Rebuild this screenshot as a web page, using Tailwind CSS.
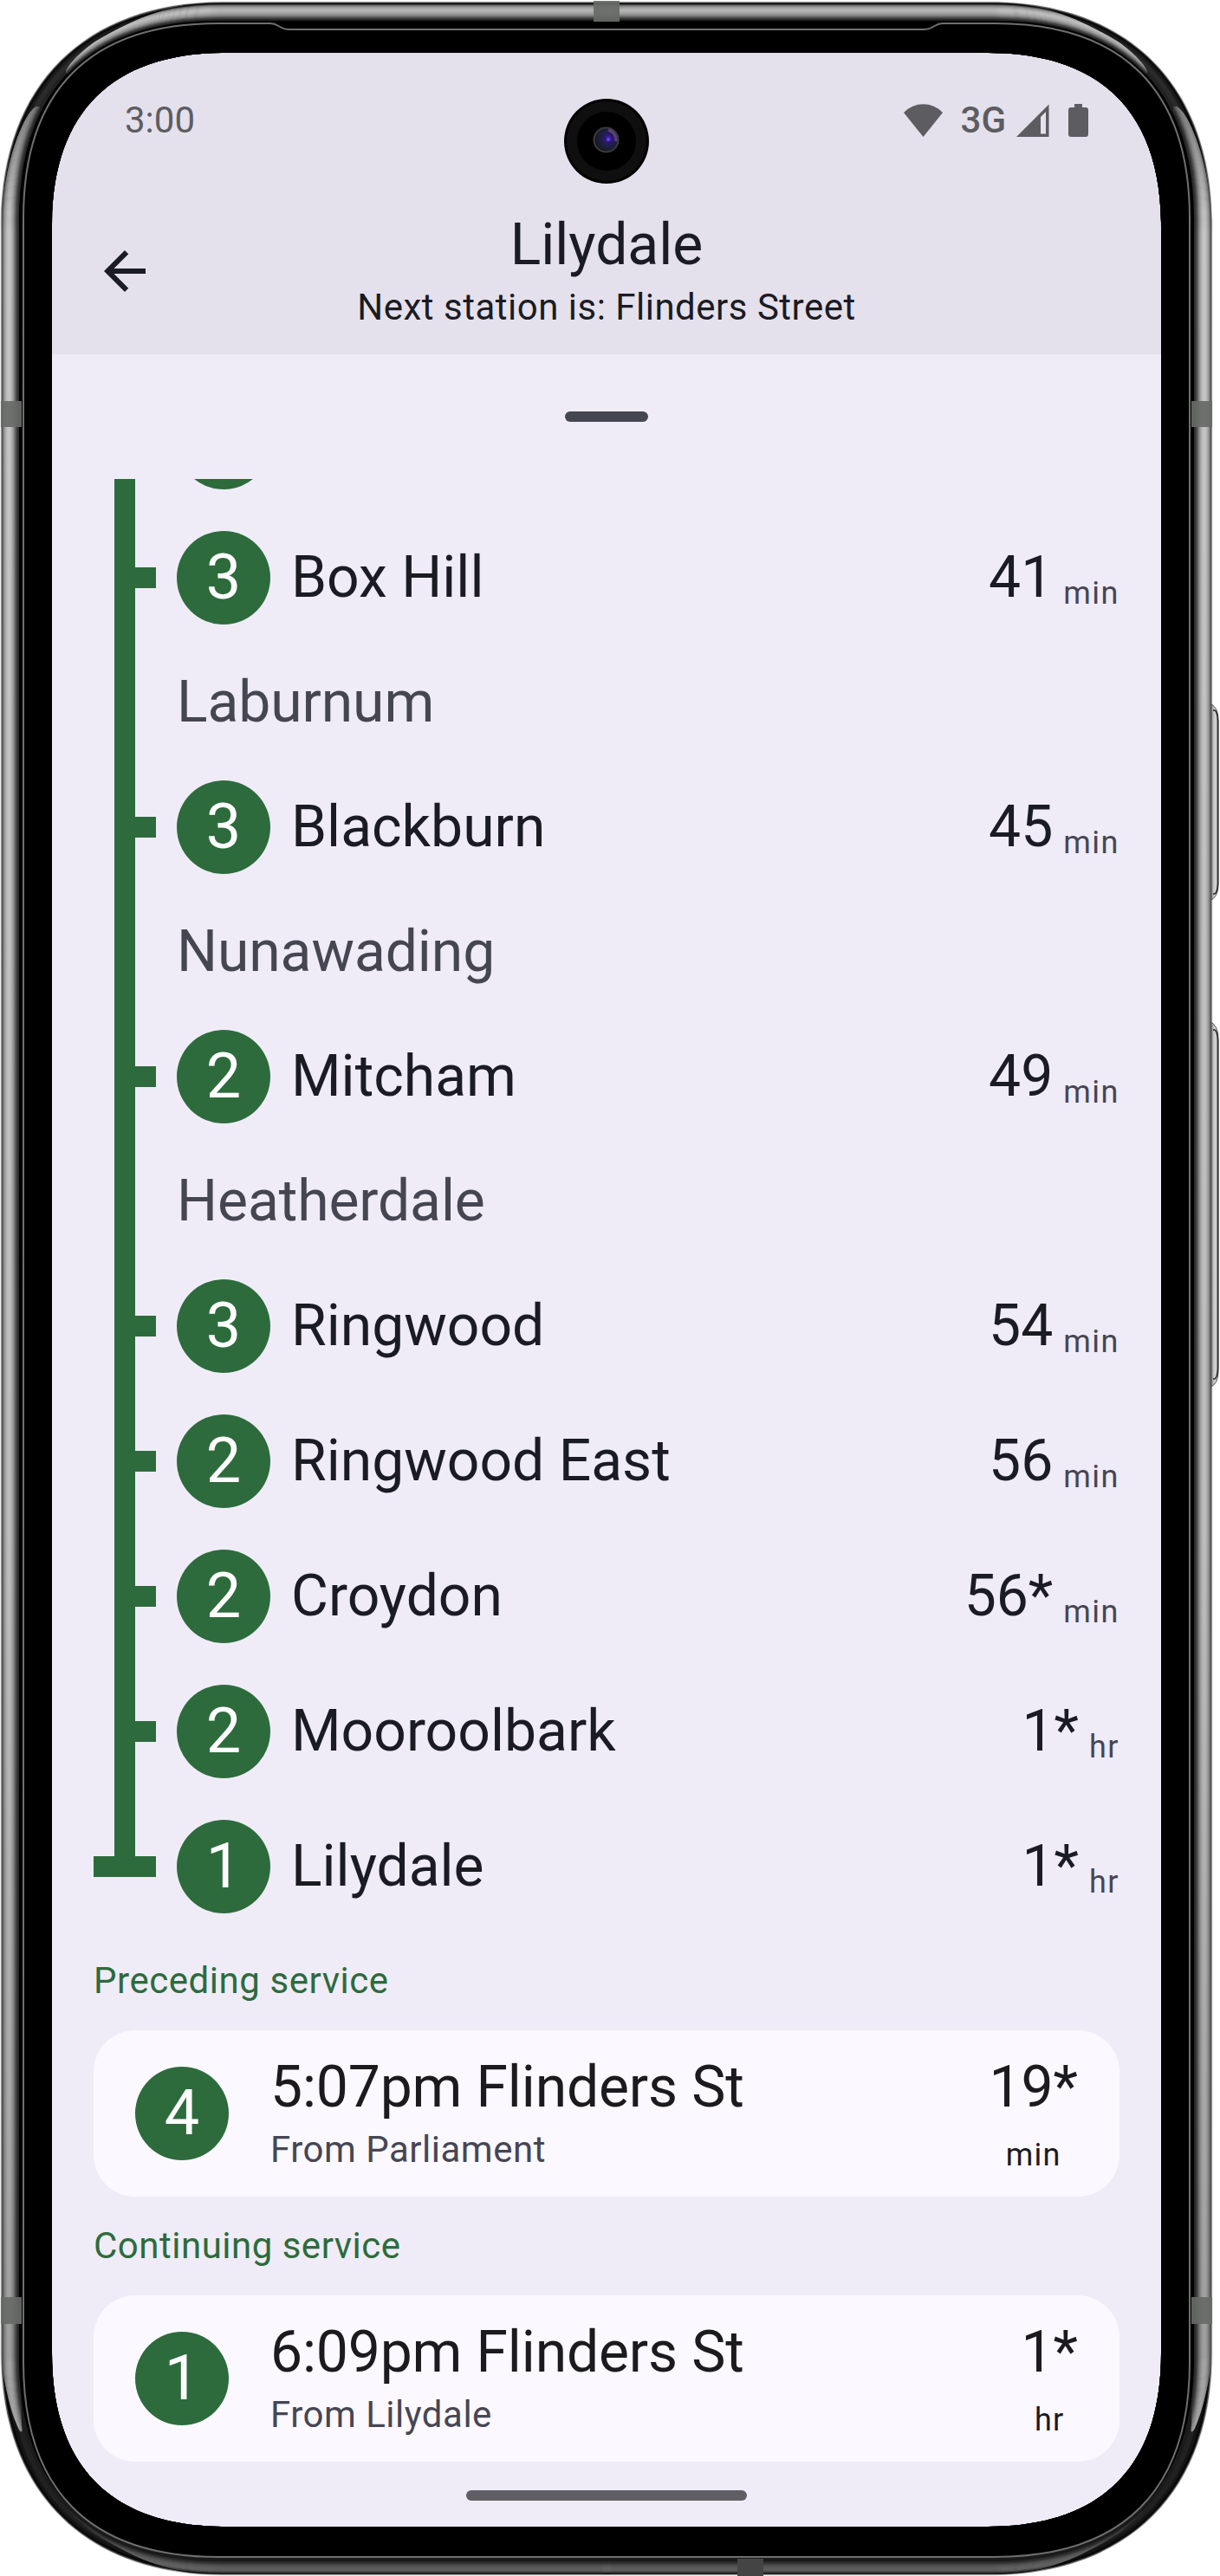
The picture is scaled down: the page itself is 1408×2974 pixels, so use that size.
<!DOCTYPE html>
<html lang="en">
<head>
<meta charset="utf-8">
<title>Lilydale service</title>
<script src="https://cdn.jsdelivr.net/npm/@tailwindcss/browser@4"></script>
</head>
<body class="bg-white">
<div class="relative w-[1408px] h-[2974px] overflow-hidden pl-[60px] pt-[61px] font-[Roboto,sans-serif]">

  <main class="w-[1280px] h-[2856px] bg-[#efecf7] rounded-[130px] overflow-hidden flex flex-col text-[#1b1b23]">
    <header class="h-[348px] shrink-0 bg-[#e4e1ec] flex flex-col">
      <div class="h-[156px] flex items-center justify-between pl-[84px] pr-[84px] text-[42px] leading-[60px] text-[#5d5c61]">
        <span>3:00</span>
        <div class="flex items-center">
          <svg class="w-[45px] h-[38px]" viewBox="0 0 45 38" fill="#5d5c61"><path d="M0 10Q9.500 .3 22.500 .3T45 10L22.500 38Z"/></svg>
          <span class="ml-[21px] font-medium">3G</span>
          <svg class="ml-[12px] w-[38px] h-[38px]" viewBox="0 0 38 38" fill="#5d5c61"><path fill-rule="evenodd" d="M37.500 .500V38H0ZM34 9L28 15V34.500H34Z"/></svg>
          <svg class="ml-[22px] w-[23px] h-[38px]" viewBox="0 0 23 38" fill="#5d5c61"><path d="M7 0H16V4H20Q23 4 23 7V35Q23 38 20 38H3Q0 38 0 35V7Q0 4 3 4H7Z"/></svg>
        </div>
      </div>
      <div class="grid grid-cols-[72px_1fr_72px] items-center px-[48px] pt-[24px]">
        <svg class="w-[72px] h-[72px]" viewBox="0 0 24 24" fill="#1b1b23"><path d="M20 11H7.830l5.590-5.590L12 4l-8 8 8 8 1.410-1.410L7.830 13H20v-2z"/></svg>
        <div class="text-center">
          <h1 class="text-[66px] leading-[84px]">Lilydale</h1>
          <p class="text-[42px] leading-[60px] tracking-[0.5px]">Next station is: Flinders Street</p>
        </div>
      </div>
    </header>

    <div class="h-[144px] shrink-0 flex justify-center pt-[66px]">
      <div class="w-[96px] h-[12px] rounded-full bg-[#464653]"></div>
    </div>

    <section class="h-[1680px] shrink-0 overflow-hidden flex flex-col justify-end px-[48px] text-[66px] leading-[84px]">
      <div id="stops" class="flex flex-col"></div>
    </section>

    <section class="px-[48px] flex flex-col">
      <h2 class="pt-[24px] pb-[27px] text-[42px] leading-[60px] tracking-[0.55px] text-[#2d6b3c]">Preceding service</h2>
      <article class="h-[192px] rounded-[48px] bg-[#fbf8ff] px-[48px] py-[24px] flex items-center text-[#1b1b1f]">
        <div class="size-[108px] rounded-full bg-[#2d6b3c] text-white text-[72px] leading-none flex items-center justify-center">4</div>
        <div class="ml-[48px] flex-1">
          <div class="text-[66px] leading-[84px] tracking-[-0.15px]">5:07pm Flinders St</div>
          <div class="text-[42px] leading-[60px] tracking-[0.5px] text-[#464653]">From Parliament</div>
        </div>
        <div class="h-full flex flex-col items-center justify-between">
          <span class="text-[66px] leading-[84px]">19*</span>
          <span class="text-[36px] leading-[48px] tracking-[1.2px]">min</span>
        </div>
      </article>
      <h2 class="pt-[27px] pb-[27px] text-[42px] leading-[60px] tracking-[0.5px] text-[#2d6b3c]">Continuing service</h2>
      <article class="h-[192px] rounded-[48px] bg-[#fbf8ff] px-[48px] py-[24px] flex items-center text-[#1b1b1f]">
        <div class="size-[108px] rounded-full bg-[#2d6b3c] text-white text-[72px] leading-none flex items-center justify-center">1</div>
        <div class="ml-[48px] flex-1">
          <div class="text-[66px] leading-[84px] tracking-[-0.15px]">6:09pm Flinders St</div>
          <div class="text-[42px] leading-[60px] tracking-[0.5px] text-[#464653]">From Lilydale</div>
        </div>
        <div class="h-full flex flex-col items-center justify-between">
          <span class="text-[66px] leading-[84px]">1*</span>
          <span class="text-[36px] leading-[48px] tracking-[1.2px]">hr</span>
        </div>
      </article>
    </section>

    <div class="flex justify-center pt-[33px]">
      <div class="w-[324px] h-[12px] rounded-full bg-[#5f5e64]"></div>
    </div>
  </main>

  <!-- Device body: laid over the screen, with a cut-out for the display -->
  <svg class="absolute inset-0 pointer-events-none" width="1408" height="2974" viewBox="0 0 1408 2974">
    <defs>
      <linearGradient id="fall" x1="0" y1="0" x2="0" y2="2974" gradientUnits="userSpaceOnUse"><stop offset="0" stop-color="#000" stop-opacity="0"/><stop offset=".6" stop-color="#000" stop-opacity=".05"/><stop offset="1" stop-color="#000" stop-opacity=".24"/></linearGradient>
      <linearGradient id="fade" x1="0" y1="120" x2="0" y2="270" gradientUnits="userSpaceOnUse"><stop offset="0" stop-color="#000" stop-opacity=".4"/><stop offset="1" stop-color="#000" stop-opacity="0"/></linearGradient>
      <radialGradient id="lens" cx=".6" cy=".45" r=".55"><stop offset="0" stop-color="#4a2ad0"/><stop offset=".3" stop-color="#2a1a6a"/><stop offset=".7" stop-color="#1c2038"/><stop offset="1" stop-color="#151a20"/></radialGradient>
      <linearGradient id="key" x1="1396" x2="1407" y1="0" y2="0" gradientUnits="userSpaceOnUse"><stop offset="0" stop-color="#777"/><stop offset=".35" stop-color="#bbb"/><stop offset=".6" stop-color="#d4d4d4"/><stop offset="1" stop-color="#aaa"/></linearGradient>
      <clipPath id="sides"><path d="M0 262C4 205 16 158 34 131C40 123 45 121 46 125C44 140 27 190 24 262V2712C24 2750 24 2770 25 2800C26 2808 25 2809 22 2805C12 2785 3 2745 0 2712Z"/></clipPath>
      <clipPath id="upper"><path d="M705 0H258C200 4 160 18 110 48C90 62 78 76 76 83C77 86 79 85 81 83C125 49 175 27 258 26H705Z"/></clipPath>
      <clipPath id="lower"><path d="M705 2974H258C200 2972 160 2957 110 2925C90 2910 76 2896 72 2887C76 2886 79 2889 82 2893C130 2935 180 2955 258 2956H705Z"/></clipPath>
    </defs>

    <!-- keys -->
    <path d="M1396 812Q1406 816 1406 830V1022Q1406 1036 1396 1040Z" fill="url(#key)" stroke="#555"/>
    <path d="M1400 820h2q3 2 3.500 12V1020q-.5 10-3.500 12h-2" fill="none" stroke="#222" stroke-width="1.500"/>
    <path d="M1396 1179Q1406 1184 1406 1198V1584Q1406 1598 1396 1602Z" fill="url(#key)" stroke="#555"/>
    <path d="M1400 1189h2q3 2 3.500 12V1580q-.5 10-3.500 12h-2" fill="none" stroke="#222" stroke-width="1.500"/>

    <g id="shell"></g>

    <!-- bezel inner hairline, stepping down around the earpiece -->
    <path fill="none" stroke="#6f6f6f" stroke-width="2" d="M27 252C27 104 104 27 252 27H312C322 27 322 34 334 34H1066C1078 34 1078 27 1088 27H1148C1296 27 1373 104 1373 252V2727C1373 2875 1296 2952 1148 2952H252C104 2952 27 2875 27 2727Z"/>

    <!-- antenna lines -->
    <path d="M685 1H715V25H685ZM1 463H25V493H1ZM1375 463H1399V493H1375ZM1 2652H25V2683H1ZM1375 2652H1399V2683H1375Z" fill="#686b68" opacity=".93"/>
    <path d="M851 2954H881V2974H851Z" fill="#444"/>

    <!-- front camera -->
    <circle cx="700" cy="163" r="49" fill="#000"/>
    <circle cx="700" cy="163" r="40" fill="none" stroke="#0f0f0f" stroke-width="12"/>
    <circle cx="699.500" cy="161.500" r="14" fill="url(#lens)" stroke="#3c3a40" stroke-width="2"/>
    <path d="M702 150q9 3 9 13" fill="none" stroke="#8a5a9c" stroke-width="3" opacity=".6"/>
    <circle cx="702" cy="161" r="1.800" fill="#6a48ff"/>
  </svg>
</div>

<script>
(() => {
  // Stop list: [name, platform, time, unit]; stops without a platform are skipped by this service.
  const stops = [
    ['Box Hill', 3, '41', 'min'], ['Laburnum'], ['Blackburn', 3, '45', 'min'], ['Nunawading'],
    ['Mitcham', 2, '49', 'min'], ['Heatherdale'], ['Ringwood', 3, '54', 'min'], ['Ringwood East', 2, '56', 'min'],
    ['Croydon', 2, '56*', 'min'], ['Mooroolbark', 2, '1*', 'hr'], ['Lilydale', 1, '1*', 'hr']
  ];
  const disc = n => `<div class="size-[108px] shrink-0 rounded-full bg-[#2d6b3c] text-white text-[72px] leading-none flex items-center justify-center">${n}</div>`;
  let html = `<div class="h-[156px] flex items-center"><div class="w-[24px] h-full ml-[24px] mr-[48px] bg-[#2d6b3c]"></div>${disc('')}</div>`;
  stops.forEach(([name, platform, time, unit], i) => {
    if (!platform) {
      html += `<div class="h-[132px] flex items-center tracking-[-0.1px] text-[#464653]"><div class="w-[24px] h-full ml-[24px] mr-[48px] bg-[#2d6b3c]"></div>${name}</div>`;
      return;
    }
    const rail = i === stops.length - 1
      ? `<div class="w-[72px] h-full flex flex-col"><div class="w-[24px] h-[66px] ml-[24px] bg-[#2d6b3c]"></div><div class="w-[72px] h-[24px] bg-[#2d6b3c]"></div></div>`
      : `<div class="w-[72px] h-full flex items-center"><div class="w-[24px] h-full ml-[24px] bg-[#2d6b3c]"></div><div class="w-[24px] h-[24px] bg-[#2d6b3c]"></div></div>`;
    html += `<div class="h-[156px] flex items-center">${rail}<div class="w-[24px]"></div>${disc(platform)}
      <div class="ml-[24px] flex-1">${name}</div>
      <div class="flex items-end"><span>${time}</span><span class="ml-[12px] text-[36px] leading-[48px] tracking-[1.5px] text-[#464653]">${unit}</span></div></div>`;
  });
  document.getElementById('stops').innerHTML = html;

  // Rounded outline with continuous corners; L is the corner length, c the handle distance from the corner.
  const outline = (l, t, r, b, L, c) =>
    `M${l} ${t + L}C${l} ${t + c} ${l + c} ${t} ${l + L} ${t}H${r - L}C${r - c} ${t} ${r} ${t + c} ${r} ${t + L}` +
    `V${b - L}C${r} ${b - c} ${r - c} ${b} ${r - L} ${b}H${l + L}C${l + c} ${b} ${l} ${b - c} ${l} ${b - L}Z`;
  const hole = outline(60, 61, 1340, 2917, 200, 69);
  const inset = i => outline(2 + i, 3 + i, 1398 - i, 2972 - i, 255 - 1.25 * i, 96 - 0.8 * i);
  const ring = (i, fill) => `<path fill-rule="evenodd" fill="${fill}" d="${inset(i)}${hole}"/>`;
  // Metal shading across the band, one grey per pixel of inset.
  const metal = greys => greys.map((g, i) => `<path fill="none" stroke="rgb(${g},${g},${g})" stroke-width="1.6" d="${inset(i + 1)}"/>`).join('');
  const side = metal([85, 120, 150, 168, 182, 194, 202, 206, 206, 202, 194, 182, 168, 150, 128, 104, 82, 66, 52]);
  const upper = metal([20, 20, 90, 128, 150, 166, 178, 186, 190, 188, 182, 174, 166, 154, 140, 122, 98, 76, 58, 40]);
  const lower = metal([16, 60, 92, 116, 126, 128, 126, 122, 118, 110, 100, 86, 70, 56]);
  const half = `<g clip-path="url(#sides)">${side}<path fill="url(#fade)" d="M0 110H60V270H0Z"/></g>
    <g clip-path="url(#upper)">${upper}</g><g clip-path="url(#lower)">${lower}</g>`;
  document.getElementById('shell').innerHTML =
    ring(-1.5, '#00000022') + ring(-0.5, '#555') + ring(1, '#0a0a0a') + ring(4, '#1a1a1a') + ring(8, '#2a2a2a') + ring(15, '#222') + ring(20, '#000') +
    half + `<g transform="matrix(-1 0 0 1 1400 0)">${half}</g>` + ring(1, 'url(#fall)');
})();
</script>
</body>
</html>
